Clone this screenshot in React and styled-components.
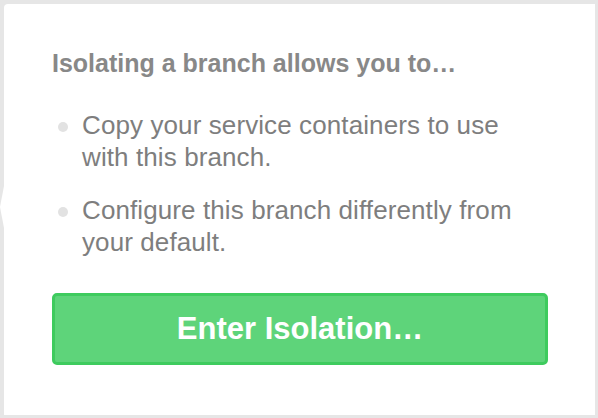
import React from 'react';
import styled, { createGlobalStyle } from 'styled-components';

const GlobalStyle = createGlobalStyle`
  html, body {
    margin: 0;
    padding: 0;
    background: #e6e6e6;
  }
  body {
    font-family: "Liberation Sans", Arial, Helvetica, sans-serif;
  }
`;

const Page = styled.div`
  box-sizing: border-box;
  width: 598px;
  height: 418px;
  padding: 4px 3px 3px 4px;
  background: #e6e6e6;
`;

const Popover = styled.div`
  position: relative;
  box-sizing: border-box;
  height: 100%;
  padding: 45px 47px 0 48px;
  background: #fff;
  border-radius: 4px 0 0 0;
`;

const Arrow = styled.span`
  position: absolute;
  left: -4px;
  top: 182px;
  width: 0;
  height: 0;
  border-top: 21px solid transparent;
  border-bottom: 21px solid transparent;
  border-right: 4px solid #fff;
`;

const Title = styled.h2`
  margin: 0;
  font-size: 25px;
  line-height: 28px;
  font-weight: bold;
  color: #888;
`;

const List = styled.ul`
  list-style: none;
  margin: 32px 0 0;
  padding: 0 23px 0 6px;
  display: flex;
  flex-direction: column;
  gap: 21px;
`;

const Item = styled.li`
  display: flex;
  align-items: flex-start;
  gap: 14px;
  font-size: 26px;
  line-height: 32px;
  letter-spacing: 0.1px;
  color: #7e7e7e;
`;

const Bullet = styled.span`
  flex: none;
  width: 10px;
  height: 10px;
  margin-top: 13px;
  border-radius: 50%;
  background: #e2e2e2;
`;

const Button = styled.button`
  box-sizing: border-box;
  display: flex;
  align-items: center;
  justify-content: center;
  width: 100%;
  height: 72px;
  margin-top: 35px;
  padding: 0;
  border: 3px solid #3ecb5e;
  border-radius: 5px;
  background: #5ed47a;
  color: #fff;
  font-family: inherit;
  font-size: 31px;
  font-weight: bold;
  cursor: pointer;
`;

const points = [
  'Copy your service containers to use with this branch.',
  'Configure this branch differently from your default.',
];

export default function App() {
  return (
    <Page>
      <GlobalStyle />
      <Popover>
        <Arrow />
        <Title>Isolating a branch allows you to…</Title>
        <List>
          {points.map((p) => (
            <Item key={p}>
              <Bullet />
              <span>{p}</span>
            </Item>
          ))}
        </List>
        <Button>Enter Isolation…</Button>
      </Popover>
    </Page>
  );
}
